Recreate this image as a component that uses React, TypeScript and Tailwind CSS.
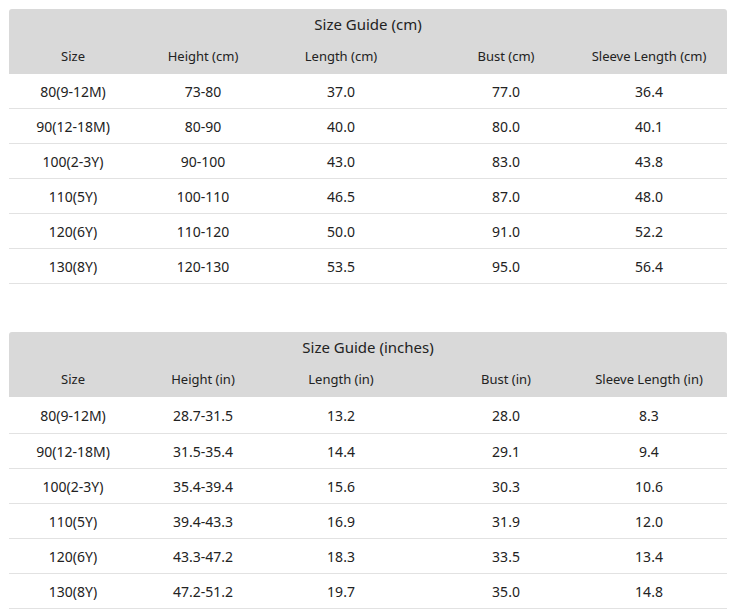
const cmRows = [
  ["80(9-12M)", "73-80", "37.0", "77.0", "36.4"],
  ["90(12-18M)", "80-90", "40.0", "80.0", "40.1"],
  ["100(2-3Y)", "90-100", "43.0", "83.0", "43.8"],
  ["110(5Y)", "100-110", "46.5", "87.0", "48.0"],
  ["120(6Y)", "110-120", "50.0", "91.0", "52.2"],
  ["130(8Y)", "120-130", "53.5", "95.0", "56.4"],
];

const inRows = [
  ["80(9-12M)", "28.7-31.5", "13.2", "28.0", "8.3"],
  ["90(12-18M)", "31.5-35.4", "14.4", "29.1", "9.4"],
  ["100(2-3Y)", "35.4-39.4", "15.6", "30.3", "10.6"],
  ["110(5Y)", "39.4-43.3", "16.9", "31.9", "12.0"],
  ["120(6Y)", "43.3-47.2", "18.3", "33.5", "13.4"],
  ["130(8Y)", "47.2-51.2", "19.7", "35.0", "14.8"],
];

const cols = "grid grid-cols-[128px_132px_144px_186px_128px]";

function Cells({ values }: { values: string[] }) {
  return (
    <>
      {values.map((v, i) => (
        <div key={i} className={i === 4 ? "flex justify-center whitespace-nowrap pr-[28px]" : "flex justify-center whitespace-nowrap"}>
          <span>{v}</span>
        </div>
      ))}
    </>
  );
}

function SizeTable({ title, unit, rows, firstRowPad }: { title: string; unit: string; rows: string[][]; firstRowPad?: boolean }) {
  return (
    <div className="w-[718px]">
      <div className="rounded-t-[3px] bg-[#d9d9d9]">
        <div className="flex h-[30px] items-center justify-center pt-[1px] text-[15px]">{title}</div>
        <div className={`${cols} h-[35px] items-center text-[13px]`}>
          <Cells values={["Size", `Height (${unit})`, `Length (${unit})`, `Bust (${unit})`, `Sleeve Length (${unit})`]} />
        </div>
      </div>
      {rows.map((r, i) => (
        <div
          key={i}
          className={`${cols} ${i === 0 && firstRowPad ? "h-[37px]" : "h-[35px]"} items-center border-b border-[#e2e2e2] text-[14px]`}
        >
          <Cells values={r} />
        </div>
      ))}
    </div>
  );
}

export default function App() {
  return (
    <div className="h-[615px] w-[749px] bg-white pl-[9px] pt-[9px] text-[#222] [font-family:'Noto_Sans',sans-serif]">
      <SizeTable title="Size Guide (cm)" unit="cm" rows={cmRows} />
      <div className="mt-[48px]">
        <SizeTable title="Size Guide (inches)" unit="in" rows={inRows} firstRowPad />
      </div>
    </div>
  );
}
